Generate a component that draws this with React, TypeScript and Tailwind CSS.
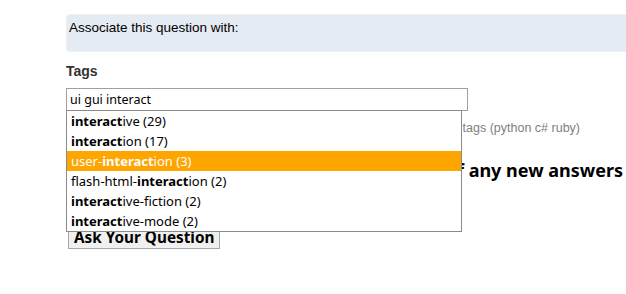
const suggestions = [
  { pre: "", match: "interact", post: "ive (29)" },
  { pre: "", match: "interact", post: "ion (17)" },
  { pre: "user-", match: "interact", post: "ion (3)", active: true },
  { pre: "flash-html-", match: "interact", post: "ion (2)" },
  { pre: "", match: "interact", post: "ive-fiction (2)" },
  { pre: "", match: "interact", post: "ive-mode (2)" },
];

const App = () => {
  return (
    <div className="relative w-[626px] h-[294px] overflow-hidden bg-white pl-[66px] pt-[14px] font-['Liberation_Sans',Arial,sans-serif]">
      {/* Associate box */}
      <div className="h-[38px] w-[600px] rounded-sm border border-dotted border-[#f4f6f9] bg-[#e5ebf2] pl-[2px] pt-[5px] text-[13.5px] leading-[16px] text-black">
        Associate this question with:
      </div>

      <div className="mt-[11px] text-[14px] font-bold leading-[16px] text-[#333]">Tags</div>

      <div className="relative mt-[9px] w-[402px]">
        <div className="h-[23px] border border-[#a0a0a0] bg-white pl-[3px] font-['Noto_Sans',sans-serif] text-[12.5px] leading-[21px] text-black">
          ui gui interact
        </div>

        {/* autocomplete dropdown */}
        <ul className="absolute left-0 top-[22px] z-10 w-[396px] border border-[#8a8a8a] bg-white font-['Noto_Sans',sans-serif] text-[13px] text-black">
          {suggestions.map((s, i) => (
            <li
              key={i}
              className={
                s.active
                  ? "h-[20px] bg-[#ffa500] pl-[4px] leading-[20px] text-white"
                  : "h-[20px] pl-[4px] leading-[20px]"
              }
            >
              {s.pre}
              <b>{s.match}</b>
              {s.post}
            </li>
          ))}
        </ul>
      </div>

      <div className="mt-[10px] w-[514px] whitespace-nowrap text-right text-[12.5px] leading-[14px] text-[#808080]">
        Combine multiple words into single-word tags (python c# ruby)
      </div>

      <div className="mt-[24px] w-[557px] whitespace-nowrap text-right font-['Noto_Sans',sans-serif] text-[18px] font-bold leading-[22px] text-black">
        Notify me daily of any new answers
      </div>

      <button className="ml-[2px] mt-[44px] h-[24px] border border-[#a8a8a8] bg-[#f0f0f0] px-[5px] font-['Noto_Sans',sans-serif] text-[15.3px] font-bold leading-[20px] text-black">
        Ask Your Question
      </button>
    </div>
  );
};

export default App;
